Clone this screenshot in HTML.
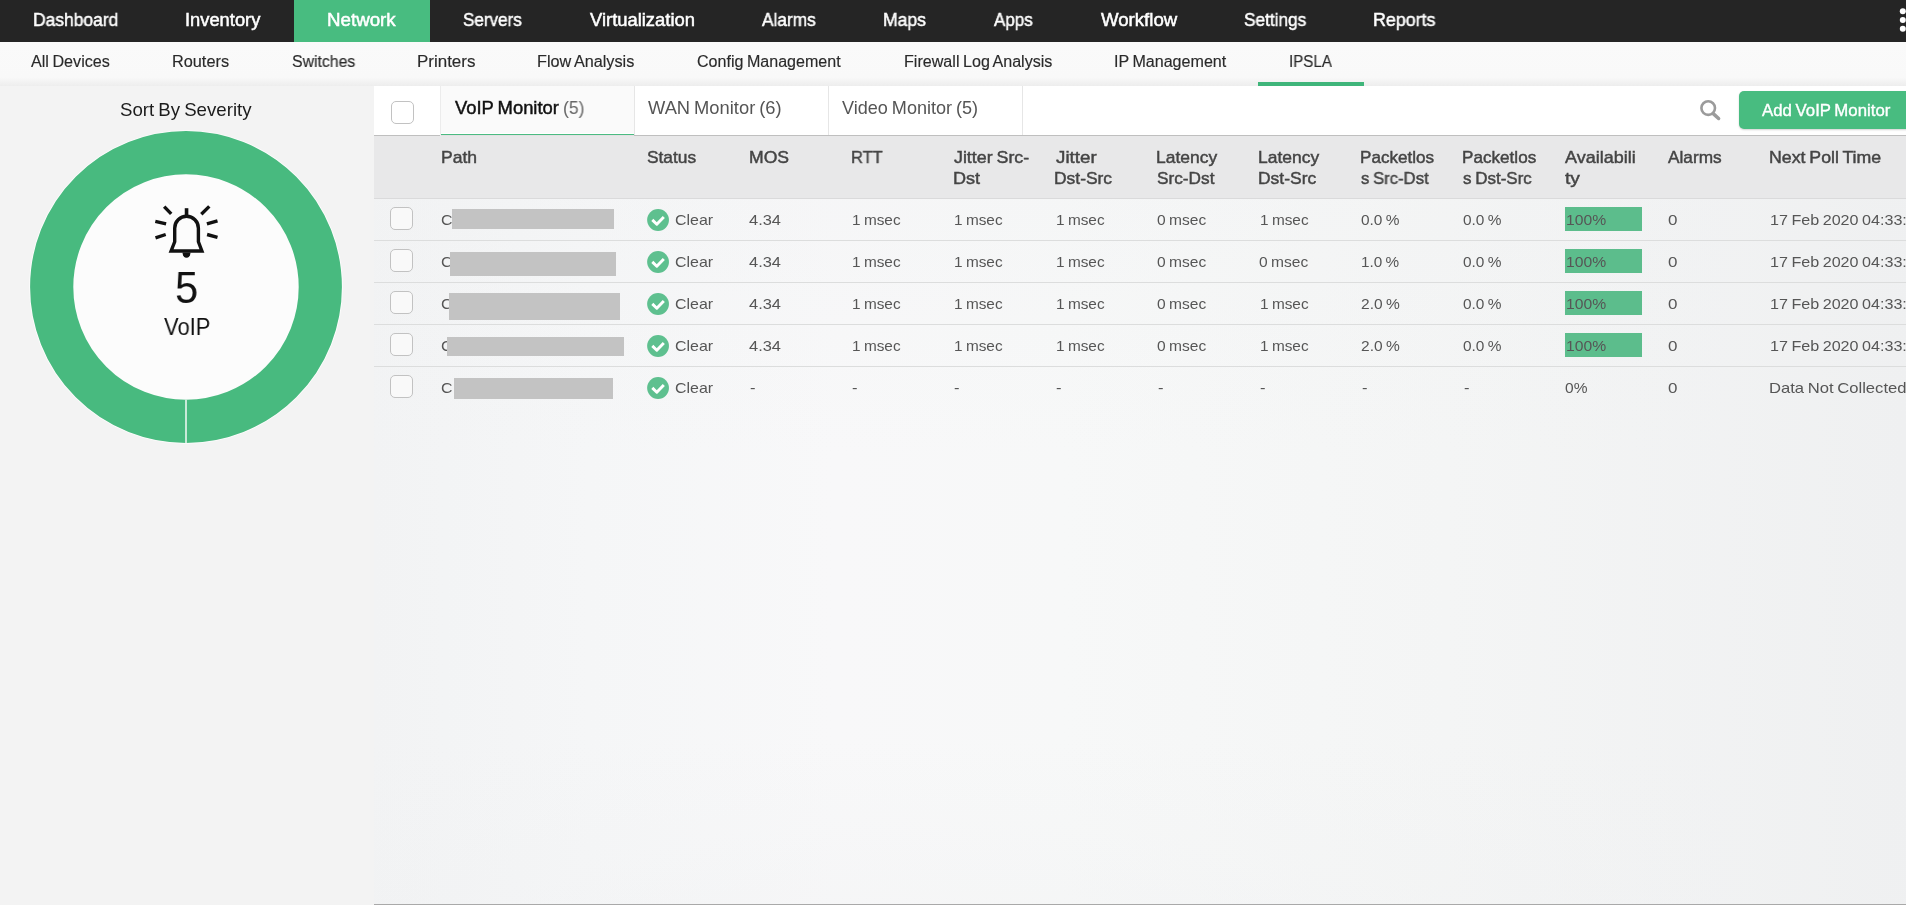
<!DOCTYPE html>
<html lang="en">
<head>
<meta charset="utf-8">
<title>OpManager - IPSLA VoIP Monitor</title>
<style>
*{box-sizing:border-box}
html,body{margin:0;padding:0}
body{width:1906px;height:905px;overflow:hidden;background:#f3f3f3;position:relative;font-family:"Liberation Sans",sans-serif}
.t{will-change:transform;position:absolute;white-space:nowrap;line-height:1;transform-origin:0 0;display:block}
#nav{position:absolute;left:0;top:0;width:1906px;height:42px;background:#252525}
#nav .act{position:absolute;left:294px;top:0;width:136px;height:42px;background:#48bc80}
#sub{position:absolute;left:0;top:42px;width:1906px;height:44px;background:linear-gradient(#fafafa 0,#f9f9f9 80%,#ededed 100%)}
#sub .ul{position:absolute;left:1258px;top:40px;width:106px;height:4px;background:#3fb57a}
#side{position:absolute;left:2px;top:86px;width:366px;height:819px;background:#f3f3f3}
#main{position:absolute;left:374px;top:86px;width:1532px;height:819px;border-bottom:1px solid #a9a9a9;overflow:hidden;
 background:linear-gradient(180deg,rgba(240,241,242,.4) 0,rgba(255,255,255,0) 45%,rgba(255,255,255,0) 80%,rgba(240,241,242,.3) 100%),linear-gradient(90deg,#f2f3f4 0,#f5f6f7 14%,#f8f8f9 30%,#f7f8f8 45%,#f4f5f5 70%,#eff0f1 100%)}
#tabs{position:absolute;left:0;top:0;width:1532px;height:50px;background:#fff;border-bottom:1px solid #bfbfbf}
.tab{position:absolute;top:0;height:49px;width:194px;border-left:1px solid #e6e6e6}
.tab.on{height:50px;border-left-color:#ececec;background:linear-gradient(#fafafa 0,#fafafa 47px,#fff 47px,#fff 48px,#4bbb82 48px,#4bbb82 49px,#e2e1e2 49px,#e2e1e2 50px)}
#thead{position:absolute;left:0;top:50px;width:1532px;height:63px;background:#e8e8e9;border-bottom:1px solid #dadadb}
.row{position:absolute;left:0;width:1532px;height:42px;border-bottom:1px solid #dcdddd;}
.cb{position:absolute;width:23px;height:23px;border:1px solid #c2c2c2;border-radius:5px;background:#f9f9f9}
.red{position:absolute;background:#c3c3c3}
.bar{position:absolute;left:1565px;width:77px;height:24px;background:#5cbd8c}
#btn{position:absolute;left:1739px;top:91px;width:180px;height:38px;border-radius:5px;background:#48bc80;box-shadow:0 1px 2px rgba(0,0,0,.18)}
svg{position:absolute;overflow:visible}
</style>
</head>
<body>
<div id="nav"><div class="act"></div>
<svg style="left:1896px;top:6px" width="10" height="30" viewBox="0 0 10 30"><circle cx="6.8" cy="5.3" r="3" fill="#fff"/><circle cx="6.8" cy="14" r="3" fill="#fff"/><circle cx="6.8" cy="22.7" r="3" fill="#fff"/></svg>
</div>
<div id="sub"><div class="ul"></div></div>
<div id="side"></div>
<svg id="donut" style="left:0;top:86px" width="374" height="400" viewBox="0 86 374 400">
 <circle cx="186" cy="287" r="156.2" fill="none" stroke="#fdfdfd" stroke-width="1.2"/>
 <circle cx="186" cy="287" r="134.3" fill="#fcfcfc" stroke="#48ba7f" stroke-width="43.2"/>
 <line x1="186" y1="399.6" x2="186" y2="443" stroke="#d0ecdd" stroke-width="1.9"/>
 <g fill="none" stroke="#111" stroke-width="3.4" stroke-linejoin="miter">
  <path d="M186.55 208.2V215.2" stroke-width="3.6"/>
  <path d="M171.1 251H201.9L198.4 241.8V228.15A11.85 11.85 0 0 0 174.7 228.15V241.8Z"/>
  <path d="M164.2 206.6L171.2 213.9M155.3 221.3L166.1 223.9M155.5 237.8L165.7 234.5M209.3 206.4L201.3 214.2M217.5 220.8L206.9 223.9M217.5 237.4L207.1 234.5"/>
 </g>
 <path d="M182.5 252.6A4 5.2 0 0 0 190.5 252.6Z" fill="#111"/>
</svg>
<div id="main">
 <div id="tabs">
  <div class="tab on" style="left:66px"></div>
  <div class="tab" style="left:260px"></div>
  <div class="tab" style="left:454px"></div>
  <div class="tab" style="left:648px;width:1px"></div>
 </div>
 <div id="thead"></div>
 <div class="row" style="top:113px"></div>
 <div class="row" style="top:155px"></div>
 <div class="row" style="top:197px"></div>
 <div class="row" style="top:239px"></div>
 <div class="row" style="top:281px;border-bottom:0"></div>
</div>
<div class="cb" style="left:391px;top:101px;background:#fff"></div>
<div class="cb" style="left:390px;top:207px"></div>
<div class="cb" style="left:390px;top:249px"></div>
<div class="cb" style="left:390px;top:291px"></div>
<div class="cb" style="left:390px;top:333px"></div>
<div class="cb" style="left:390px;top:375px"></div>
<div class="bar" style="top:207px"></div>
<div class="bar" style="top:249px"></div>
<div class="bar" style="top:291px"></div>
<div class="bar" style="top:333px"></div>
<div id="btn"></div>
<svg style="left:1698px;top:98px" width="24" height="24" viewBox="1698 98 24 24"><circle cx="1708.2" cy="108.1" r="6.8" fill="none" stroke="#9b9b9b" stroke-width="2.6"/><path d="M1713.2 113.6L1718.6 118.5" stroke="#9b9b9b" stroke-width="3.5" stroke-linecap="round"/></svg>
<svg style="left:646px;top:208.05px" width="24" height="24" viewBox="0 0 24 24"><circle cx="12.05" cy="12" r="10.9" fill="#5ec08f"/><path d="M6.3 11.9L10.8 16.3L17.8 9" fill="none" stroke="#fff" stroke-width="2.9" stroke-linejoin="round"/></svg>
<svg style="left:646px;top:250.05px" width="24" height="24" viewBox="0 0 24 24"><circle cx="12.05" cy="12" r="10.9" fill="#5ec08f"/><path d="M6.3 11.9L10.8 16.3L17.8 9" fill="none" stroke="#fff" stroke-width="2.9" stroke-linejoin="round"/></svg>
<svg style="left:646px;top:292.05px" width="24" height="24" viewBox="0 0 24 24"><circle cx="12.05" cy="12" r="10.9" fill="#5ec08f"/><path d="M6.3 11.9L10.8 16.3L17.8 9" fill="none" stroke="#fff" stroke-width="2.9" stroke-linejoin="round"/></svg>
<svg style="left:646px;top:334.05px" width="24" height="24" viewBox="0 0 24 24"><circle cx="12.05" cy="12" r="10.9" fill="#5ec08f"/><path d="M6.3 11.9L10.8 16.3L17.8 9" fill="none" stroke="#fff" stroke-width="2.9" stroke-linejoin="round"/></svg>
<svg style="left:646px;top:376.05px" width="24" height="24" viewBox="0 0 24 24"><circle cx="12.05" cy="12" r="10.9" fill="#5ec08f"/><path d="M6.3 11.9L10.8 16.3L17.8 9" fill="none" stroke="#fff" stroke-width="2.9" stroke-linejoin="round"/></svg>
<span class="t" style="left:33.29px;top:11.00px;font-size:18px;color:#fff;transform:scaleX(0.9691);-webkit-text-stroke:0.5px #fff">Dashboard</span>
<span class="t" style="left:184.92px;top:11.00px;font-size:18px;color:#fff;transform:scaleX(1.0173);-webkit-text-stroke:0.5px #fff">Inventory</span>
<span class="t" style="left:327.19px;top:11.00px;font-size:18px;color:#fff;transform:scaleX(1.0402);-webkit-text-stroke:0.5px #fff">Network</span>
<span class="t" style="left:463.42px;top:11.00px;font-size:18px;color:#fff;transform:scaleX(0.9476);-webkit-text-stroke:0.5px #fff">Servers</span>
<span class="t" style="left:590.05px;top:11.00px;font-size:18px;color:#fff;transform:scaleX(1.0214);-webkit-text-stroke:0.5px #fff">Virtualization</span>
<span class="t" style="left:762.45px;top:11.00px;font-size:18px;color:#fff;transform:scaleX(0.9594);-webkit-text-stroke:0.5px #fff">Alarms</span>
<span class="t" style="left:883.08px;top:11.00px;font-size:18px;color:#fff;transform:scaleX(0.9751);-webkit-text-stroke:0.5px #fff">Maps</span>
<span class="t" style="left:993.85px;top:11.00px;font-size:18px;color:#fff;transform:scaleX(0.9439);-webkit-text-stroke:0.5px #fff">Apps</span>
<span class="t" style="left:1100.55px;top:11.00px;font-size:18px;color:#fff;transform:scaleX(1.0337);-webkit-text-stroke:0.5px #fff">Workflow</span>
<span class="t" style="left:1244.31px;top:11.00px;font-size:18px;color:#fff;transform:scaleX(0.9574);-webkit-text-stroke:0.5px #fff">Settings</span>
<span class="t" style="left:1372.86px;top:11.00px;font-size:18px;color:#fff;transform:scaleX(0.9908);-webkit-text-stroke:0.5px #fff">Reports</span>
<span class="t" style="left:31.18px;top:54.00px;font-size:16px;color:#2a2a2a;transform:scaleX(1.0085);word-spacing:-0.96px;-webkit-text-stroke:0.15px #2a2a2a">All Devices</span>
<span class="t" style="left:171.90px;top:54.00px;font-size:16px;color:#2a2a2a;transform:scaleX(1.0178);-webkit-text-stroke:0.15px #2a2a2a">Routers</span>
<span class="t" style="left:291.78px;top:54.00px;font-size:16px;color:#2a2a2a;transform:scaleX(0.9876);-webkit-text-stroke:0.15px #2a2a2a">Switches</span>
<span class="t" style="left:417.05px;top:54.00px;font-size:16px;color:#2a2a2a;transform:scaleX(1.0595);-webkit-text-stroke:0.15px #2a2a2a">Printers</span>
<span class="t" style="left:537.41px;top:54.00px;font-size:16px;color:#2a2a2a;transform:scaleX(1.0141);word-spacing:-0.96px;-webkit-text-stroke:0.15px #2a2a2a">Flow Analysis</span>
<span class="t" style="left:697.02px;top:54.00px;font-size:16px;color:#2a2a2a;transform:scaleX(1.0035);word-spacing:-0.96px;-webkit-text-stroke:0.15px #2a2a2a">Config Management</span>
<span class="t" style="left:903.82px;top:54.00px;font-size:16px;color:#2a2a2a;transform:scaleX(1.0063);word-spacing:-0.96px;-webkit-text-stroke:0.15px #2a2a2a">Firewall Log Analysis</span>
<span class="t" style="left:1114.02px;top:54.00px;font-size:16px;color:#2a2a2a;transform:scaleX(1.0048);word-spacing:-0.96px;-webkit-text-stroke:0.15px #2a2a2a">IP Management</span>
<span class="t" style="left:1289.29px;top:54.00px;font-size:16px;color:#2a2a2a;transform:scaleX(0.9448);-webkit-text-stroke:0.15px #2a2a2a">IPSLA</span>
<span class="t" style="left:120.42px;top:100.70px;font-size:18.5px;color:#1c1c1c;transform:scaleX(1.0090);word-spacing:-1.11px">Sort By Severity</span>
<span class="t" style="left:174.70px;top:266.10px;font-size:44px;color:#111;transform:scaleX(0.9472)">5</span>
<span class="t" style="left:163.60px;top:316.30px;font-size:23.5px;color:#111;transform:scaleX(0.9328)">VoIP</span>
<span class="t" style="left:454.73px;top:98.60px;font-size:18px;color:#111;transform:scaleX(1.0225);word-spacing:-1.08px;-webkit-text-stroke:0.45px #111">VoIP Monitor</span>
<span class="t" style="left:562.68px;top:98.60px;font-size:18px;color:#666;transform:scaleX(0.9741)">(5)</span>
<span class="t" style="left:647.80px;top:99.80px;font-size:17.8px;color:#555;transform:scaleX(1.0313);word-spacing:-1.07px">WAN Monitor (6)</span>
<span class="t" style="left:841.50px;top:99.80px;font-size:17.8px;color:#555;transform:scaleX(1.0165);word-spacing:-1.07px">Video Monitor (5)</span>
<span class="t" style="left:1761.88px;top:102.80px;font-size:15.6px;color:#fff;transform:scaleX(1.0766);word-spacing:-0.94px;-webkit-text-stroke:0.35px #fff">Add VoIP Monitor</span>
<span class="t" style="left:440.85px;top:148.85px;font-size:17px;color:#444;transform:scaleX(1.0321);-webkit-text-stroke:0.45px #444">Path</span>
<span class="t" style="left:646.78px;top:148.85px;font-size:17px;color:#444;transform:scaleX(1.0193);-webkit-text-stroke:0.45px #444">Status</span>
<span class="t" style="left:748.75px;top:148.85px;font-size:17px;color:#444;transform:scaleX(1.0343);-webkit-text-stroke:0.45px #444">MOS</span>
<span class="t" style="left:851.04px;top:148.85px;font-size:17px;color:#444;transform:scaleX(0.9685);-webkit-text-stroke:0.45px #444">RTT</span>
<span class="t" style="left:953.75px;top:148.85px;font-size:17px;color:#444;transform:scaleX(1.0482);word-spacing:-1.02px;-webkit-text-stroke:0.45px #444">Jitter Src-</span>
<span class="t" style="left:952.61px;top:170.10px;font-size:17px;color:#444;transform:scaleX(1.0627);-webkit-text-stroke:0.45px #444">Dst</span>
<span class="t" style="left:1055.53px;top:148.85px;font-size:17px;color:#444;transform:scaleX(1.1056);-webkit-text-stroke:0.45px #444">Jitter</span>
<span class="t" style="left:1054.46px;top:170.10px;font-size:17px;color:#444;transform:scaleX(1.0249);-webkit-text-stroke:0.45px #444">Dst-Src</span>
<span class="t" style="left:1156.26px;top:148.85px;font-size:17px;color:#444;transform:scaleX(1.0263);-webkit-text-stroke:0.45px #444">Latency</span>
<span class="t" style="left:1157.09px;top:170.10px;font-size:17px;color:#444;transform:scaleX(1.0134);-webkit-text-stroke:0.45px #444">Src-Dst</span>
<span class="t" style="left:1258.46px;top:148.85px;font-size:17px;color:#444;transform:scaleX(1.0263);-webkit-text-stroke:0.45px #444">Latency</span>
<span class="t" style="left:1258.46px;top:170.10px;font-size:17px;color:#444;transform:scaleX(1.0267);-webkit-text-stroke:0.45px #444">Dst-Src</span>
<span class="t" style="left:1360.29px;top:148.85px;font-size:17px;color:#444;transform:scaleX(1.0057);-webkit-text-stroke:0.45px #444">Packetlos</span>
<span class="t" style="left:1361.36px;top:170.10px;font-size:17px;color:#444;transform:scaleX(0.9823);word-spacing:-1.02px;-webkit-text-stroke:0.45px #444">s Src-Dst</span>
<span class="t" style="left:1462.09px;top:148.85px;font-size:17px;color:#444;transform:scaleX(1.0070);-webkit-text-stroke:0.45px #444">Packetlos</span>
<span class="t" style="left:1463.16px;top:170.10px;font-size:17px;color:#444;transform:scaleX(0.9986);word-spacing:-1.02px;-webkit-text-stroke:0.45px #444">s Dst-Src</span>
<span class="t" style="left:1565.22px;top:148.85px;font-size:17px;color:#444;transform:scaleX(1.0577);-webkit-text-stroke:0.45px #444">Availabili</span>
<span class="t" style="left:1565.22px;top:170.10px;font-size:17px;color:#444;transform:scaleX(1.1296);-webkit-text-stroke:0.45px #444">ty</span>
<span class="t" style="left:1667.62px;top:148.85px;font-size:17px;color:#444;transform:scaleX(1.0148);-webkit-text-stroke:0.45px #444">Alarms</span>
<span class="t" style="left:1768.54px;top:148.85px;font-size:17px;color:#444;transform:scaleX(1.0427);word-spacing:-1.02px;-webkit-text-stroke:0.45px #444">Next Poll Time</span>
<span class="t" style="left:440.85px;top:211.90px;font-size:15px;color:#565656;transform:scaleX(1.0602)">C</span>
<span class="t" style="left:674.95px;top:211.90px;font-size:15px;color:#565656;transform:scaleX(1.0632)">Clear</span>
<span class="t" style="left:749.14px;top:211.90px;font-size:15px;color:#565656;transform:scaleX(1.0946)">4.34</span>
<span class="t" style="left:852.04px;top:211.90px;font-size:15px;color:#565656;transform:scaleX(1.0242);word-spacing:-0.90px">1 msec</span>
<span class="t" style="left:954.04px;top:211.90px;font-size:15px;color:#565656;transform:scaleX(1.0242);word-spacing:-0.90px">1 msec</span>
<span class="t" style="left:1056.04px;top:211.90px;font-size:15px;color:#565656;transform:scaleX(1.0242);word-spacing:-0.90px">1 msec</span>
<span class="t" style="left:1157.01px;top:211.90px;font-size:15px;color:#565656;transform:scaleX(1.0374);word-spacing:-0.90px">0 msec</span>
<span class="t" style="left:1260.04px;top:211.90px;font-size:15px;color:#565656;transform:scaleX(1.0242);word-spacing:-0.90px">1 msec</span>
<span class="t" style="left:1360.92px;top:211.90px;font-size:15px;color:#565656;transform:scaleX(1.0286);word-spacing:-0.90px">0.0 %</span>
<span class="t" style="left:1462.92px;top:211.90px;font-size:15px;color:#565656;transform:scaleX(1.0286);word-spacing:-0.90px">0.0 %</span>
<span class="t" style="left:1566.12px;top:211.90px;font-size:15px;color:#565656;transform:scaleX(1.0462)">100%</span>
<span class="t" style="left:1667.77px;top:211.90px;font-size:15px;color:#565656;transform:scaleX(1.1331)">0</span>
<span class="t" style="left:1769.79px;top:211.90px;font-size:15px;color:#565656;transform:scaleX(1.0741);word-spacing:-0.90px">17 Feb 2020 04:33:11 PM IST</span>
<span class="t" style="left:440.85px;top:253.90px;font-size:15px;color:#565656;transform:scaleX(1.0602)">C</span>
<span class="t" style="left:674.95px;top:253.90px;font-size:15px;color:#565656;transform:scaleX(1.0632)">Clear</span>
<span class="t" style="left:749.14px;top:253.90px;font-size:15px;color:#565656;transform:scaleX(1.0946)">4.34</span>
<span class="t" style="left:852.04px;top:253.90px;font-size:15px;color:#565656;transform:scaleX(1.0242);word-spacing:-0.90px">1 msec</span>
<span class="t" style="left:954.04px;top:253.90px;font-size:15px;color:#565656;transform:scaleX(1.0242);word-spacing:-0.90px">1 msec</span>
<span class="t" style="left:1056.04px;top:253.90px;font-size:15px;color:#565656;transform:scaleX(1.0242);word-spacing:-0.90px">1 msec</span>
<span class="t" style="left:1157.01px;top:253.90px;font-size:15px;color:#565656;transform:scaleX(1.0374);word-spacing:-0.90px">0 msec</span>
<span class="t" style="left:1259.01px;top:253.90px;font-size:15px;color:#565656;transform:scaleX(1.0374);word-spacing:-0.90px">0 msec</span>
<span class="t" style="left:1361.24px;top:253.90px;font-size:15px;color:#565656;transform:scaleX(1.0198);word-spacing:-0.90px">1.0 %</span>
<span class="t" style="left:1462.92px;top:253.90px;font-size:15px;color:#565656;transform:scaleX(1.0286);word-spacing:-0.90px">0.0 %</span>
<span class="t" style="left:1566.12px;top:253.90px;font-size:15px;color:#565656;transform:scaleX(1.0462)">100%</span>
<span class="t" style="left:1667.77px;top:253.90px;font-size:15px;color:#565656;transform:scaleX(1.1331)">0</span>
<span class="t" style="left:1769.79px;top:253.90px;font-size:15px;color:#565656;transform:scaleX(1.0741);word-spacing:-0.90px">17 Feb 2020 04:33:11 PM IST</span>
<span class="t" style="left:440.85px;top:295.90px;font-size:15px;color:#565656;transform:scaleX(1.0602)">C</span>
<span class="t" style="left:674.95px;top:295.90px;font-size:15px;color:#565656;transform:scaleX(1.0632)">Clear</span>
<span class="t" style="left:749.14px;top:295.90px;font-size:15px;color:#565656;transform:scaleX(1.0946)">4.34</span>
<span class="t" style="left:852.04px;top:295.90px;font-size:15px;color:#565656;transform:scaleX(1.0242);word-spacing:-0.90px">1 msec</span>
<span class="t" style="left:954.04px;top:295.90px;font-size:15px;color:#565656;transform:scaleX(1.0242);word-spacing:-0.90px">1 msec</span>
<span class="t" style="left:1056.04px;top:295.90px;font-size:15px;color:#565656;transform:scaleX(1.0242);word-spacing:-0.90px">1 msec</span>
<span class="t" style="left:1157.01px;top:295.90px;font-size:15px;color:#565656;transform:scaleX(1.0374);word-spacing:-0.90px">0 msec</span>
<span class="t" style="left:1260.04px;top:295.90px;font-size:15px;color:#565656;transform:scaleX(1.0242);word-spacing:-0.90px">1 msec</span>
<span class="t" style="left:1360.67px;top:295.90px;font-size:15px;color:#565656;transform:scaleX(1.0353);word-spacing:-0.90px">2.0 %</span>
<span class="t" style="left:1462.92px;top:295.90px;font-size:15px;color:#565656;transform:scaleX(1.0286);word-spacing:-0.90px">0.0 %</span>
<span class="t" style="left:1566.12px;top:295.90px;font-size:15px;color:#565656;transform:scaleX(1.0462)">100%</span>
<span class="t" style="left:1667.77px;top:295.90px;font-size:15px;color:#565656;transform:scaleX(1.1331)">0</span>
<span class="t" style="left:1769.79px;top:295.90px;font-size:15px;color:#565656;transform:scaleX(1.0741);word-spacing:-0.90px">17 Feb 2020 04:33:11 PM IST</span>
<span class="t" style="left:440.85px;top:337.90px;font-size:15px;color:#565656;transform:scaleX(1.0602)">C</span>
<span class="t" style="left:674.95px;top:337.90px;font-size:15px;color:#565656;transform:scaleX(1.0632)">Clear</span>
<span class="t" style="left:749.14px;top:337.90px;font-size:15px;color:#565656;transform:scaleX(1.0946)">4.34</span>
<span class="t" style="left:852.04px;top:337.90px;font-size:15px;color:#565656;transform:scaleX(1.0242);word-spacing:-0.90px">1 msec</span>
<span class="t" style="left:954.04px;top:337.90px;font-size:15px;color:#565656;transform:scaleX(1.0242);word-spacing:-0.90px">1 msec</span>
<span class="t" style="left:1056.04px;top:337.90px;font-size:15px;color:#565656;transform:scaleX(1.0242);word-spacing:-0.90px">1 msec</span>
<span class="t" style="left:1157.01px;top:337.90px;font-size:15px;color:#565656;transform:scaleX(1.0374);word-spacing:-0.90px">0 msec</span>
<span class="t" style="left:1260.04px;top:337.90px;font-size:15px;color:#565656;transform:scaleX(1.0242);word-spacing:-0.90px">1 msec</span>
<span class="t" style="left:1360.67px;top:337.90px;font-size:15px;color:#565656;transform:scaleX(1.0353);word-spacing:-0.90px">2.0 %</span>
<span class="t" style="left:1462.92px;top:337.90px;font-size:15px;color:#565656;transform:scaleX(1.0286);word-spacing:-0.90px">0.0 %</span>
<span class="t" style="left:1566.12px;top:337.90px;font-size:15px;color:#565656;transform:scaleX(1.0462)">100%</span>
<span class="t" style="left:1667.77px;top:337.90px;font-size:15px;color:#565656;transform:scaleX(1.1331)">0</span>
<span class="t" style="left:1769.79px;top:337.90px;font-size:15px;color:#565656;transform:scaleX(1.0741);word-spacing:-0.90px">17 Feb 2020 04:33:11 PM IST</span>
<span class="t" style="left:440.85px;top:379.90px;font-size:15px;color:#565656;transform:scaleX(1.0602)">C</span>
<span class="t" style="left:674.95px;top:379.90px;font-size:15px;color:#565656;transform:scaleX(1.0632)">Clear</span>
<span class="t" style="left:749.68px;top:379.90px;font-size:15px;color:#565656;transform:scaleX(1.1030)">-</span>
<span class="t" style="left:851.68px;top:379.90px;font-size:15px;color:#565656;transform:scaleX(1.1030)">-</span>
<span class="t" style="left:953.68px;top:379.90px;font-size:15px;color:#565656;transform:scaleX(1.1030)">-</span>
<span class="t" style="left:1055.68px;top:379.90px;font-size:15px;color:#565656;transform:scaleX(1.1030)">-</span>
<span class="t" style="left:1157.68px;top:379.90px;font-size:15px;color:#565656;transform:scaleX(1.1030)">-</span>
<span class="t" style="left:1259.68px;top:379.90px;font-size:15px;color:#565656;transform:scaleX(1.1030)">-</span>
<span class="t" style="left:1361.68px;top:379.90px;font-size:15px;color:#565656;transform:scaleX(1.1030)">-</span>
<span class="t" style="left:1463.68px;top:379.90px;font-size:15px;color:#565656;transform:scaleX(1.1030)">-</span>
<span class="t" style="left:1565.21px;top:379.90px;font-size:15px;color:#565656;transform:scaleX(1.0350)">0%</span>
<span class="t" style="left:1667.77px;top:379.90px;font-size:15px;color:#565656;transform:scaleX(1.1331)">0</span>
<span class="t" style="left:1768.90px;top:379.90px;font-size:15px;color:#565656;transform:scaleX(1.1082);word-spacing:-0.90px">Data Not Collected</span>
<span class="t" style="left:452.57px;top:379.90px;font-size:15px;color:#565656;transform:scaleX(0.9877)">i</span>
<div class="red" style="left:452px;top:209px;width:162px;height:20px"></div>
<div class="red" style="left:450px;top:252px;width:166px;height:24px"></div>
<div class="red" style="left:449px;top:293px;width:171px;height:27px"></div>
<div class="red" style="left:447px;top:337px;width:177px;height:19px"></div>
<div class="red" style="left:454px;top:378px;width:159px;height:21px"></div>
</body>
</html>
